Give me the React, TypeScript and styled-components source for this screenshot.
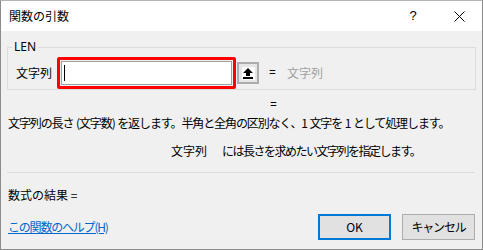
import React from "react";
import styled, { createGlobalStyle } from "styled-components";

const GlobalStyle = createGlobalStyle`
    html, body {
        margin: 0;
        padding: 0;
        background: #ffffff;
    }
    body {
        font-family: "Noto Sans CJK JP", "Noto Sans", sans-serif;
        font-size: 12px;
        line-height: 16px;
        color: #000000;
    }
`;

const App: React.FC = () => {
    return (
        <>
            <GlobalStyle />
            <SWindow>
                <STitleBar>
                    <STitle>関数の引数</STitle>
                    <STitleButton aria-label="help">?</STitleButton>
                    <STitleButton aria-label="close">
                        <svg width="11" height="11" viewBox="0 0 11 11">
                            <path d="M0.5 0.5 L10.5 10.5 M10.5 0.5 L0.5 10.5" stroke="#000" strokeWidth="1" />
                        </svg>
                    </STitleButton>
                </STitleBar>
                <SBody>
                    <SGroup>
                        <SLegend>LEN</SLegend>
                        <SArgRow>
                            <SArgLabel>文字列</SArgLabel>
                            <SHighlight>
                                <SField>
                                    <SCaret />
                                </SField>
                            </SHighlight>
                            <SPickButton aria-label="collapse">
                                <SPickIcon>
                                    <svg width="10" height="11" viewBox="0 0 10 11">
                                        <path d="M5 0 L10 5 L7 5 L7 8 L3 8 L3 5 L0 5 Z" fill="#000" />
                                        <rect x="0" y="9" width="10" height="2" fill="#000" />
                                    </svg>
                                </SPickIcon>
                            </SPickButton>
                            <SEquals>=</SEquals>
                            <SArgValue>文字列</SArgValue>
                        </SArgRow>
                    </SGroup>
                    <SResultEquals>=</SResultEquals>
                    <SDescription>
                        文字列の長さ (文字数) を返します。半角と全角の区別なく、1&nbsp;文字を&nbsp;1&nbsp;として処理します。
                    </SDescription>
                    <SArgHelp>
                        <SArgHelpName>文字列</SArgHelpName>
                        <SArgHelpText>には長さを求めたい文字列を指定します。</SArgHelpText>
                    </SArgHelp>
                    <SSeparator />
                    <SFormulaResult>数式の結果 =</SFormulaResult>
                    <SFooter>
                        <SLinkCell>
                            <SHelpLink href="#">この関数のヘルプ(H)</SHelpLink>
                        </SLinkCell>
                        <SButton $primary>OK</SButton>
                        <SButton $narrow>キャンセル</SButton>
                    </SFooter>
                </SBody>
            </SWindow>
        </>
    );
};

const SWindow = styled.div`
    width: 483px;
    height: 250px;
    box-sizing: border-box;
    border: 1px solid #8c8c8c;
    border-top-color: #b4b4b4;
    background: #f0f0f0;
    display: flex;
    flex-direction: column;
    overflow: hidden;
`;

const STitleBar = styled.div`
    height: 30px;
    background: #ffffff;
    display: flex;
    align-items: center;
    padding-left: 8px;
    flex-shrink: 0;
`;

const STitle = styled.div`
    flex: 1;
    font-size: 12px;
`;

const STitleButton = styled.div`
    width: 46px;
    height: 30px;
    display: flex;
    align-items: center;
    justify-content: center;
    font-family: "Liberation Sans", sans-serif;
    font-size: 13px;
`;

const SBody = styled.div`
    padding: 0 6px 0 6px;
    display: flex;
    flex-direction: column;
`;

const SGroup = styled.fieldset`
    margin: 8px 0 0;
    padding: 0 8px;
    border: 1px solid #dcdcdc;
    min-width: 0;
`;

const SLegend = styled.legend`
    margin-left: -4px;
    padding: 0 2px;
    font-family: "Noto Sans", sans-serif;
    font-size: 12px;
    line-height: 16px;
`;

const SArgRow = styled.div`
    display: flex;
    align-items: center;
    margin: 2px 0 0;
    height: 32px;
`;

const SArgLabel = styled.div`
    width: 41px;
`;

const SHighlight = styled.div`
    width: 179px;
    height: 32px;
    box-sizing: border-box;
    border: 3px solid #ff0000;
    border-radius: 2px;
    padding: 1px;
`;

const SField = styled.div`
    height: 100%;
    box-sizing: border-box;
    border: 1px solid #a0a0a0;
    background: #ffffff;
    display: flex;
    align-items: center;
    padding-left: 2px;
`;

const SCaret = styled.div`
    width: 1px;
    height: 16px;
    background: #000000;
`;

const SPickButton = styled.div`
    width: 22px;
    height: 22px;
    box-sizing: border-box;
    margin-left: 1px;
    border: 2px solid #adadad;
    background: #e6e6e6;
    display: flex;
    align-items: center;
    justify-content: center;
`;

const SPickIcon = styled.div`
    width: 13px;
    height: 13px;
    background: #ffffff;
    display: flex;
    align-items: center;
    justify-content: center;
`;

const SEquals = styled.div`
    margin-left: 10px;
    font-family: "Noto Sans", sans-serif;
`;

const SArgValue = styled.div`
    margin-left: 11px;
    color: #a0a0a0;
`;

const SResultEquals = styled.div`
    margin: 7px 0 0 263px;
    font-family: "Noto Sans", sans-serif;
`;

const SDescription = styled.div`
    margin-top: 2px;
    padding-left: 1px;
    letter-spacing: -1.1px;
    word-spacing: 1px;
    white-space: nowrap;
`;

const SArgHelp = styled.div`
    margin-top: 12px;
    padding-left: 164px;
    display: flex;
    white-space: nowrap;
`;

const SArgHelpName = styled.span`
    margin-right: 15px;
`;

const SArgHelpText = styled.span`
    letter-spacing: -1.5px;
`;

const SSeparator = styled.div`
    margin-top: 13px;
    height: 1px;
    background: #dcdcdc;
    margin-right: 1px;
`;

const SFormulaResult = styled.div`
    margin-top: 14px;
    padding-left: 1px;
`;

const SFooter = styled.div`
    margin-top: 11px;
    display: flex;
    align-items: center;
    gap: 11px;
    padding-left: 1px;
`;

const SLinkCell = styled.div`
    flex: 1;
`;

const SHelpLink = styled.a`
    color: #0066cc;
    text-decoration: underline;
    letter-spacing: -1.2px;
`;

const SButton = styled.div<{ $primary?: boolean; $narrow?: boolean }>`
    width: 73px;
    height: 26px;
    box-sizing: border-box;
    border: ${(p) => (p.$primary ? "2px solid #0078d7" : "1px solid #adadad")};
    background: #e1e1e1;
    display: flex;
    align-items: center;
    justify-content: center;
    letter-spacing: ${(p) => (p.$narrow ? "-1.2px" : "0")};
    &:last-child {
        margin-right: 1px;
    }
`;

export default App;
